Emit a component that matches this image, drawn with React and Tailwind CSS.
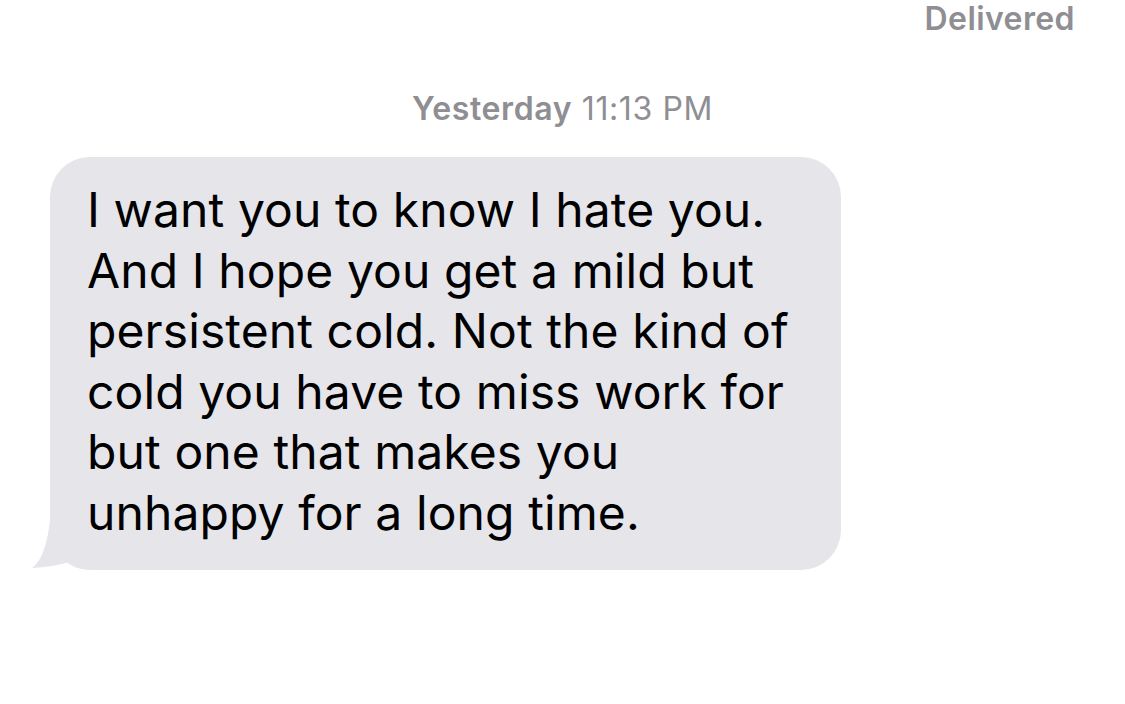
const lines = [
  "I want you to know I hate you.",
  "And I hope you get a mild but",
  "persistent cold. Not the kind of",
  "cold you have to miss work for",
  "but one that makes you",
  "unhappy for a long time.",
];

const App = () => {
  return (
    <div
      className="w-[1125px] h-[704px] bg-white overflow-hidden flex flex-col"
      style={{ fontFamily: "Inter, 'Liberation Sans', sans-serif" }}
    >
      <div className="flex justify-end pr-[50px] pt-[0px]">
        <span className="text-[32px] font-semibold text-[#8e8e93] leading-[38px] tracking-[0.4px]">
          Delivered
        </span>
      </div>

      <div className="flex justify-center mt-[52px]">
        <span className="text-[32px] text-[#8e8e93] leading-[38px] tracking-[0.6px]">
          <span className="font-semibold">Yesterday</span> 11:13 PM
        </span>
      </div>

      <div className="relative ml-[50px] mt-[29px] w-[791px]">
        <div className="bg-[#e5e5ea] rounded-[40px] pl-[37px] pr-[30px] pt-[23px] pb-[27px] text-black text-[48px] leading-[60.5px] tracking-[0.1px]">
          {lines.map((l) => (
            <div key={l}>{l}</div>
          ))}
        </div>
        <svg
          className="absolute left-[-18px] bottom-[0px]"
          width="60"
          height="50"
          viewBox="0 0 60 50"
        >
          <path
            d="M18 0 L30 0 L40 40 Q30 46 0 48 Q14 38 18 0 Z"
            fill="#e5e5ea"
          />
        </svg>
      </div>
    </div>
  );
};

export default App;
